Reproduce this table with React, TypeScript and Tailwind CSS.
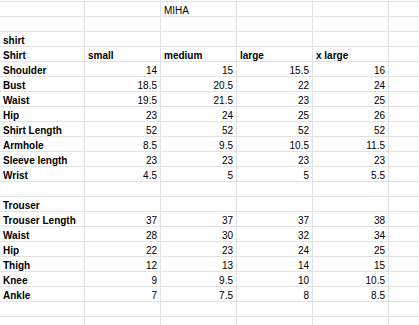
import React from "react";

type Row = { a?: string; vals?: (string | number)[]; header?: string[]; center?: string };

const rows: Row[] = [
  { center: "MIHA" },
  {},
  { a: "shirt" },
  { a: "Shirt", header: ["small", "medium", "large", "x large"] },
  { a: "Shoulder", vals: [14, 15, 15.5, 16] },
  { a: "Bust", vals: [18.5, 20.5, 22, 24] },
  { a: "Waist", vals: [19.5, 21.5, 23, 25] },
  { a: "Hip", vals: [23, 24, 25, 26] },
  { a: "Shirt Length", vals: [52, 52, 52, 52] },
  { a: "Armhole", vals: [8.5, 9.5, 10.5, 11.5] },
  { a: "Sleeve length", vals: [23, 23, 23, 23] },
  { a: "Wrist", vals: [4.5, 5, 5, 5.5] },
  {},
  { a: "Trouser" },
  { a: "Trouser Length", vals: [37, 37, 37, 38] },
  { a: "Waist", vals: [28, 30, 32, 34] },
  { a: "Hip", vals: [22, 23, 24, 25] },
  { a: "Thigh", vals: [12, 13, 14, 15] },
  { a: "Knee", vals: [9, 9.5, 10, 10.5] },
  { a: "Ankle", vals: [7, 7.5, 8, 8.5] },
  {},
  {},
];

function Cell({
  w,
  children,
  right,
  bold,
  last,
}: {
  w?: string;
  children?: React.ReactNode;
  right?: boolean;
  bold?: boolean;
  last?: boolean;
}) {
  return (
    <div
      className={`${w ?? ""} ${last ? "flex-1" : "border-r border-[#e2e2e2]"} shrink-0 h-full flex items-end overflow-hidden whitespace-nowrap ${
        right ? "justify-end pr-[3px]" : "justify-start pl-[3px]"
      } ${bold ? "font-bold" : "font-normal"}`}
    >
      <span className="leading-[10px]">{children}</span>
    </div>
  );
}

function RowView({ r }: { r: Row }) {
  const cols = ["w-[76px]", "w-[76px]", "w-[76px]", "w-[76px]"];
  return (
    <div className="flex h-[15px] border-b border-[#e2e2e2]">
      <Cell w="w-[85px]" bold>
        {r.a}
      </Cell>
      {cols.map((c, i) => {
        if (r.header) return <Cell key={i} w={c} bold>{r.header[i]}</Cell>;
        if (r.vals) return <Cell key={i} w={c} right>{r.vals[i]}</Cell>;
        if (r.center && i === 1) return <Cell key={i} w={c}>{r.center}</Cell>;
        return <Cell key={i} w={c} />;
      })}
      <Cell last />
    </div>
  );
}

export default function App() {
  return (
    <div
      className="w-[419px] h-[325px] overflow-hidden bg-white text-black text-[10px]"
      style={{ fontFamily: '"Liberation Sans", Arial, sans-serif' }}
    >
      <div className="flex h-[2px] border-b border-[#e2e2e2]">
        <div className="w-[85px] h-full border-r border-[#e2e2e2]" />
        <div className="w-[76px] h-full border-r border-[#e2e2e2]" />
        <div className="w-[76px] h-full border-r border-[#e2e2e2]" />
        <div className="w-[76px] h-full border-r border-[#e2e2e2]" />
        <div className="w-[76px] h-full border-r border-[#e2e2e2]" />
        <div className="flex-1" />
      </div>
      {rows.map((r, i) => (
        <RowView key={i} r={r} />
      ))}
    </div>
  );
}
